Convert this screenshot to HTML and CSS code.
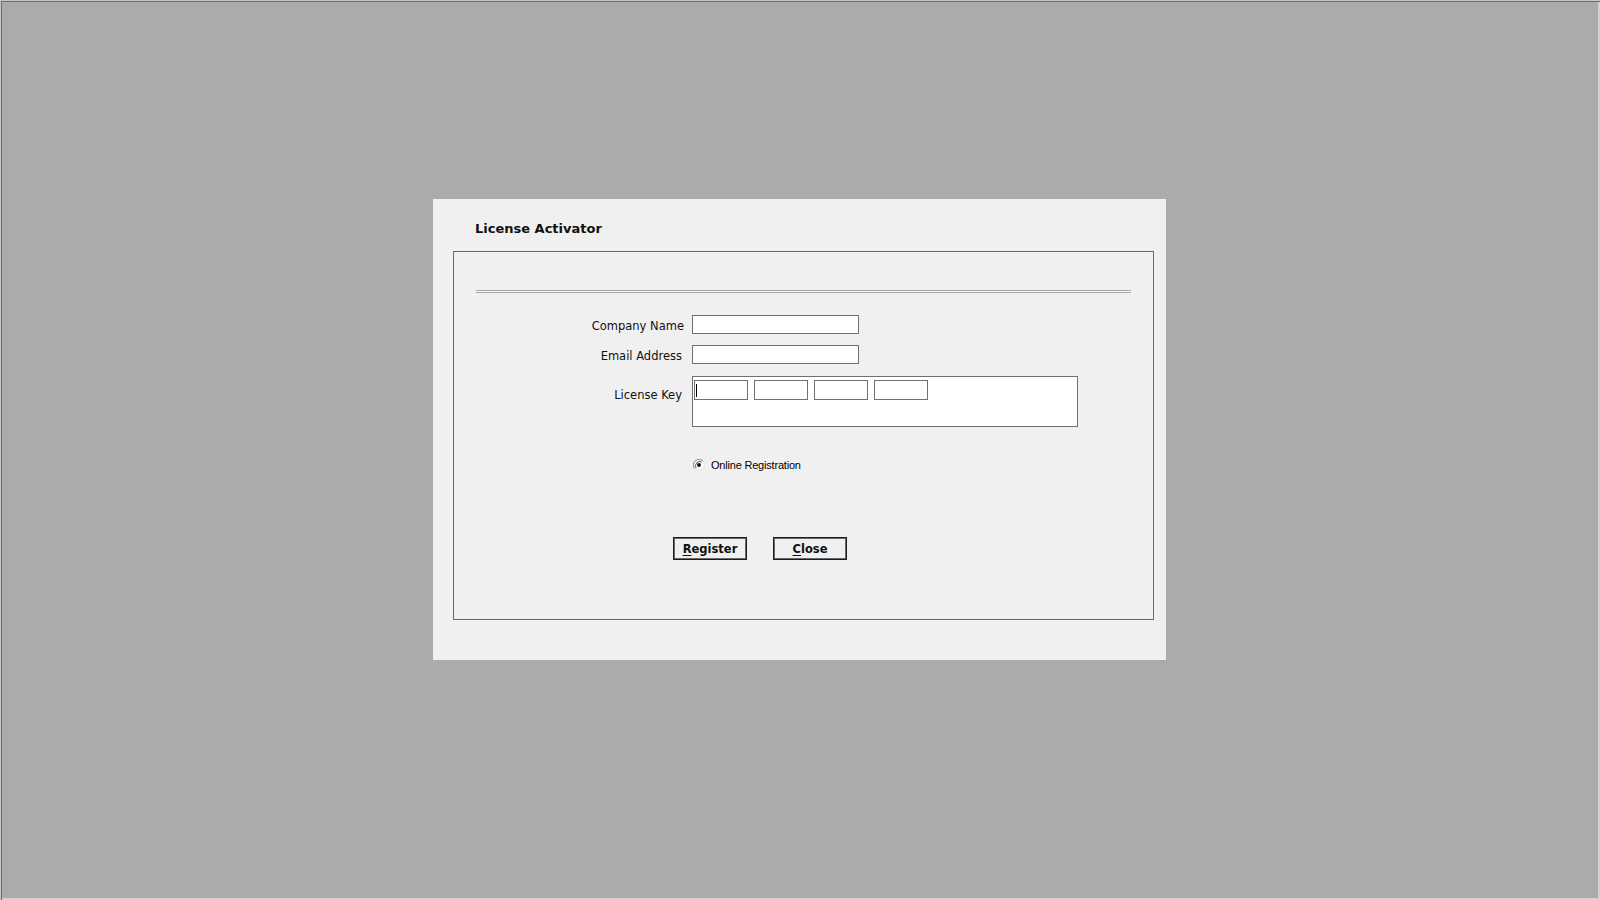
FILE: index.html
```html
<!DOCTYPE html>
<html>
<head>
<meta charset="utf-8">
<title>License Activator</title>
<link rel="stylesheet" href="styles.css">
</head>
<body>
<div class="screen">
  <div class="dialog">
    <div class="title">License Activator</div>
    <div class="group">
      <div class="separator"></div>
      <div class="form">
        <div class="row">
          <label class="label label-wide">Company Name</label>
          <div class="field"></div>
        </div>
        <div class="row">
          <label class="label">Email Address</label>
          <div class="field"></div>
        </div>
        <div class="row row-key">
          <label class="label label-key">License Key</label>
          <div class="keybox">
            <div class="keypart"><span class="caret"></span></div>
            <div class="keypart"></div>
            <div class="keypart"></div>
            <div class="keypart"></div>
          </div>
        </div>
        <div class="radio-row">
          <svg class="radio" width="12" height="12" viewBox="0 0 12 12">
            <path d="M10.2 2.2 A5.5 5.5 0 0 0 1.8 9.8" fill="none" stroke="#8a8a8a" stroke-width="1"/>
            <path d="M1.8 9.8 A5.5 5.5 0 0 0 10.2 2.2" fill="none" stroke="#e8e8e8" stroke-width="1"/>
            <circle cx="6" cy="6" r="4.3" fill="#fff"/>
            <path d="M8.8 3.0 A4.3 4.3 0 0 0 3.0 8.8" fill="none" stroke="#404040" stroke-width="0.9"/>
            <circle cx="6" cy="6" r="1.9" fill="#000"/>
          </svg>
          <span class="radio-text">Online Registration</span>
        </div>
        <div class="buttons">
          <button class="btn"><u>R</u>egister</button>
          <button class="btn"><u>C</u>lose</button>
        </div>
      </div>
    </div>
  </div>
</div>
</body>
</html>
```
FILE: styles.css
```css
html, body {
  margin: 0;
  padding: 0;
}
body {
  background: #ababab;
  font-family: "DejaVu Sans", Verdana, sans-serif;
  color: #111;
}
.screen {
  width: 1600px;
  height: 900px;
  box-sizing: border-box;
  padding: 199px 0 0 433px;
  background: #ababab;
  box-shadow: inset 1px 1px 0 #c4c4c4, inset 2px 2px 0 #6e6e6e, inset -2px -2px 0 #d2d2d2;
}
.dialog {
  width: 733px;
  height: 461px;
  box-sizing: border-box;
  background: #f0f0f0;
  padding: 22px 13px 0 20px;
}
.title {
  font-weight: bold;
  font-size: 13px;
  line-height: 16px;
  margin-left: 22px;
  color: #111;
}
.group {
  margin-top: 14px;
  width: 701px;
  height: 369px;
  box-sizing: border-box;
  border: 1px solid #6a6a6a;
  padding: 38px 0 0 22px;
}
.separator {
  width: 655px;
  height: 1px;
  border-top: 1px solid #a4a4a4;
  border-bottom: 1px solid #a4a4a4;
  background: #fafafa;
}
.form {
  margin-top: 22px;
  margin-left: -22px;
}
.row {
  display: flex;
  align-items: center;
  margin-bottom: 11px;
}
.label {
  width: 228px;
  text-align: right;
  font-size: 11.5px;
  line-height: 14px;
  padding-top: 2px;
  margin-right: 10px;
  color: #111;
}
.label-wide {
  width: 230px;
  margin-right: 8px;
}
.field {
  width: 167px;
  height: 19px;
  box-sizing: border-box;
  border: 1px solid #707070;
  background: #fff;
}
.row-key {
  align-items: flex-start;
  padding-top: 1px;
}
.label-key {
  margin-top: 10px;
  padding-top: 2px;
}
.keybox {
  width: 386px;
  height: 51px;
  box-sizing: border-box;
  border: 1px solid #707070;
  background: #fff;
  padding: 3px 0 0 1px;
  display: flex;
  align-items: flex-start;
  gap: 6px;
}
.keypart {
  width: 54px;
  height: 20px;
  box-sizing: border-box;
  border: 1px solid #707070;
  background: #fff;
  display: flex;
  align-items: center;
  padding-left: 1px;
}
.caret {
  width: 1px;
  height: 13px;
  background: #000;
}
.radio-row {
  display: flex;
  align-items: center;
  margin-top: 31px;
  margin-left: 239px;
  height: 14px;
}
.radio {
  display: block;
  margin-right: 6px;
}
.radio-text {
  font-family: "Liberation Sans", Arial, sans-serif;
  font-size: 11px;
  letter-spacing: -0.2px;
  line-height: 14px;
  color: #000;
}
.buttons {
  display: flex;
  gap: 26px;
  margin-top: 65px;
  margin-left: 219px;
}
.btn {
  width: 74px;
  height: 23px;
  box-sizing: border-box;
  background: #f0f0f0;
  border: 1px solid #1a1a1a;
  box-shadow: inset 0 0 0 1px #6a6a6a;
  font-family: "DejaVu Sans", Verdana, sans-serif;
  font-weight: bold;
  font-size: 11.5px;
  color: #111;
  padding: 0;
  margin: 0;
  line-height: 20px;
}
.btn u {
  text-decoration-thickness: 1px;
  text-underline-offset: 2px;
}
```
